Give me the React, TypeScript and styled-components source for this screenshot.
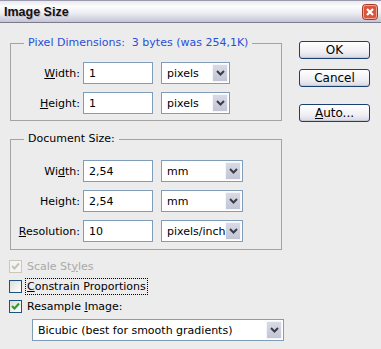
import styled, { createGlobalStyle } from "styled-components";

const GlobalStyle = createGlobalStyle`
  html, body {
    margin: 0;
    padding: 0;
  }
  body {
    background: #ececec;
    font-family: "DejaVu Sans", "Liberation Sans", sans-serif;
    font-size: 11px;
    color: #000;
  }
`;

function ChevronDown() {
  return (
    <svg width="9" height="6" viewBox="0 0 9 6">
      <path d="M1 1 L4.5 4.5 L8 1" fill="none" stroke="#3c3c48" strokeWidth="2" />
    </svg>
  );
}

function CloseIcon() {
  return (
    <svg width="16" height="16" viewBox="0 0 16 16">
      <rect x="0.5" y="0.5" width="15" height="15" rx="3" fill="#d9553c" stroke="#a33b28" />
      <rect x="1.5" y="1.5" width="13" height="13" rx="2" fill="none" stroke="#f2a896" />
      <path d="M5 5 L11 11 M11 5 L5 11" stroke="#ffffff" strokeWidth="2.2" />
    </svg>
  );
}

function CheckMark({ color }: { color: string }) {
  return (
    <svg width="9" height="9" viewBox="0 0 9 9">
      <path d="M1 4 L3.5 6.5 L8 1.5" fill="none" stroke={color} strokeWidth="2" />
    </svg>
  );
}

interface SelectProps {
  value: string;
  width: number;
}

function Select({ value, width }: SelectProps) {
  return (
    <St.Select $width={width}>
      <St.SelectValue>{value}</St.SelectValue>
      <St.SelectArrow>
        <ChevronDown />
      </St.SelectArrow>
    </St.Select>
  );
}

interface FieldRowProps {
  label: React.ReactNode;
  value: string;
  unit: string;
  unitWidth: number;
}

function FieldRow({ label, value, unit, unitWidth }: FieldRowProps) {
  return (
    <St.Row>
      <St.Label>{label}</St.Label>
      <St.Input>{value}</St.Input>
      <Select value={unit} width={unitWidth} />
    </St.Row>
  );
}

interface CheckProps {
  label: React.ReactNode;
  checked?: boolean;
  disabled?: boolean;
  focused?: boolean;
}

function Check({ label, checked, disabled, focused }: CheckProps) {
  return (
    <St.CheckRow $disabled={disabled}>
      <St.CheckBox $disabled={disabled}>
        {checked && <CheckMark color={disabled ? "#c6c3b5" : "#21a121"} />}
      </St.CheckBox>
      <St.CheckText $focused={focused}>{label}</St.CheckText>
    </St.CheckRow>
  );
}

export default function App() {
  return (
    <St.Window>
      <GlobalStyle />
      <St.TitleBar>
        <St.Title>Image Size</St.Title>
        <St.CloseBtn>
          <CloseIcon />
        </St.CloseBtn>
      </St.TitleBar>

      <St.Content>
        <St.LeftCol>
          <St.Group $padTop={12} $padBottom={6}>
            <St.Legend $blue>Pixel Dimensions:&nbsp; 3 bytes (was 254,1K)</St.Legend>
            <FieldRow label={<><u>W</u>idth:</>} value="1" unit="pixels" unitWidth={69} />
            <FieldRow label={<><u>H</u>eight:</>} value="1" unit="pixels" unitWidth={69} />
          </St.Group>

          <St.Group $padTop={14} $padBottom={7} $spaced>
            <St.Legend>Document Size:</St.Legend>
            <FieldRow label={<>Wi<u>d</u>th:</>} value="2,54" unit="mm" unitWidth={82} />
            <FieldRow label={<>Hei<u>g</u>ht:</>} value="2,54" unit="mm" unitWidth={82} />
            <FieldRow label={<><u>R</u>esolution:</>} value="10" unit="pixels/inch" unitWidth={82} />
          </St.Group>

          <St.Checks>
            <Check label={<>Scale St<u>y</u>les</>} checked disabled />
            <Check label={<><u>C</u>onstrain Proportions</>} focused />
            <Check label={<>Resample <u>I</u>mage:</>} checked />
          </St.Checks>

          <St.MethodSelect>
            <Select value="Bicubic (best for smooth gradients)" width={252} />
          </St.MethodSelect>
        </St.LeftCol>

        <St.RightCol>
          <St.Button>OK</St.Button>
          <St.Button>Cancel</St.Button>
          <St.Button $gapTop={17}>
            <u>A</u>uto...
          </St.Button>
        </St.RightCol>
      </St.Content>
    </St.Window>
  );
}

const St = {
  Window: styled.div`
    width: 381px;
    height: 349px;
    background: #ececec;
    overflow: hidden;
  `,
  TitleBar: styled.div`
    height: 23px;
    box-sizing: border-box;
    border-top: 1px solid #9a9aac;
    border-bottom: 1px solid #7c7c8c;
    background: linear-gradient(#e8e8ef 0%, #fdfdfe 25%, #ebebf2 60%, #c4c4d6 100%);
    display: flex;
    align-items: center;
    justify-content: space-between;
    padding: 0 3px 0 4px;
  `,
  Title: styled.span`
    font-family: "Liberation Sans", Arial, sans-serif;
    font-weight: bold;
    font-size: 12.5px;
    color: #111;
    text-shadow: 1px 1px 0 rgba(120, 120, 150, 0.35);
  `,
  CloseBtn: styled.div`
    flex-shrink: 0;
    width: 16px;
    height: 16px;
    display: flex;
  `,
  Content: styled.div`
    display: flex;
    padding-left: 10px;
  `,
  LeftCol: styled.div`
    width: 272px;
    padding-top: 13px;
    display: flex;
    flex-direction: column;
  `,
  RightCol: styled.div`
    margin-left: 17px;
    padding-top: 18px;
    display: flex;
    flex-direction: column;
    gap: 10px;
  `,
  Group: styled.fieldset<{ $padTop: number; $padBottom: number; $spaced?: boolean }>`
    margin: ${({ $spaced }) => ($spaced ? "11px" : "0")} 0 0 0;
    padding: ${({ $padTop }) => $padTop}px 0 ${({ $padBottom }) => $padBottom}px 0;
    border: 1px solid #a3a3a3;
    display: flex;
    flex-direction: column;
    gap: 8px;
    min-width: 0;
  `,
  Legend: styled.legend<{ $blue?: boolean }>`
    margin-left: 13px;
    padding: 0 4px;
    line-height: 14px;
    color: ${({ $blue }) => ($blue ? "#2a4fd8" : "#000")};
  `,
  Row: styled.div`
    display: flex;
    align-items: center;
    height: 22px;
  `,
  Label: styled.div`
    width: 69px;
    margin-right: 3px;
    text-align: right;
    white-space: nowrap;
  `,
  Input: styled.div`
    width: 70px;
    height: 22px;
    box-sizing: border-box;
    border: 1px solid #7f9db9;
    background: #fff;
    padding-left: 5px;
    display: flex;
    align-items: center;
  `,
  Select: styled.div<{ $width: number }>`
    width: ${({ $width }) => $width}px;
    height: 22px;
    margin-left: 8px;
    box-sizing: border-box;
    border: 1px solid #7f9db9;
    background: #fff;
    display: flex;
    align-items: center;
    overflow: hidden;
  `,
  SelectValue: styled.div`
    flex: 1;
    min-width: 0;
    padding-left: 5px;
    white-space: nowrap;
    overflow: hidden;
  `,
  SelectArrow: styled.div`
    width: 16px;
    height: 18px;
    margin-right: 1px;
    box-sizing: border-box;
    border: 1px solid #f6f6fa;
    background: linear-gradient(#d8dae6, #c2c5d4);
    display: flex;
    align-items: center;
    justify-content: center;
    flex-shrink: 0;
  `,
  Checks: styled.div`
    margin-top: 6px;
    margin-left: -1px;
    display: flex;
    flex-direction: column;
  `,
  CheckRow: styled.div<{ $disabled?: boolean }>`
    height: 20px;
    display: flex;
    align-items: center;
    gap: 4px;
    color: ${({ $disabled }) => ($disabled ? "#a9a9a9" : "#000")};
  `,
  CheckBox: styled.div<{ $disabled?: boolean }>`
    width: 13px;
    height: 13px;
    box-sizing: border-box;
    border: 1px solid ${({ $disabled }) => ($disabled ? "#cac8bb" : "#1c5180")};
    background: ${({ $disabled }) =>
      $disabled ? "#f4f4f4" : "linear-gradient(135deg, #dcdcd7, #ffffff)"};
    display: flex;
    align-items: center;
    justify-content: center;
  `,
  CheckText: styled.span<{ $focused?: boolean }>`
    padding: 1px 1px;
    outline: ${({ $focused }) => ($focused ? "1px dotted #000" : "none")};
  `,
  MethodSelect: styled.div`
    margin-top: 3px;
    margin-left: 14px;
  `,
  Button: styled.div<{ $gapTop?: number }>`
    width: 71px;
    height: 18px;
    margin-top: ${({ $gapTop }) => ($gapTop ? $gapTop - 10 : 0)}px;
    box-sizing: border-box;
    border: 1px solid #1c3f72;
    border-radius: 3px;
    background: linear-gradient(#ffffff, #f0f0f4 60%, #d8d8e2);
    box-shadow: inset 0 -1px 0 #c8c8d4;
    display: flex;
    align-items: center;
    justify-content: center;
    font-size: 12px;
  `,
};
